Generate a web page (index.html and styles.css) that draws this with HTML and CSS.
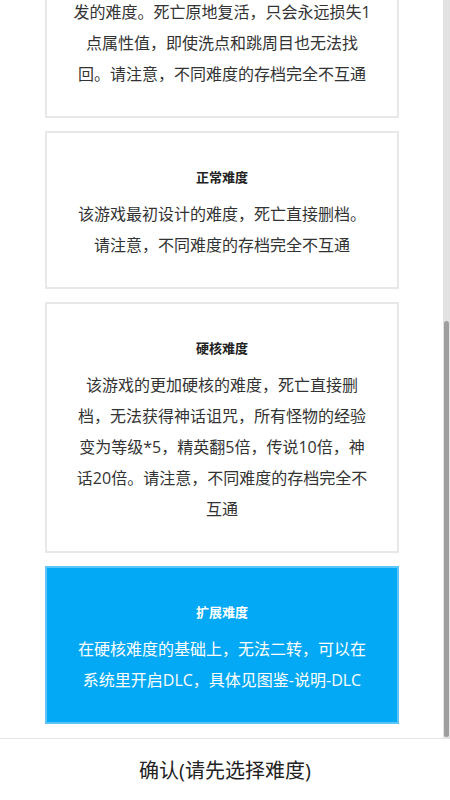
FILE: index.html
```html
<!DOCTYPE html>
<html lang="zh-CN">

<head>
    <meta charset="UTF-8">
    <meta name="viewport" content="width=device-width, initial-scale=1.0">
    <title>选择难度</title>
    <link rel="stylesheet" href="styles.css">
</head>

<body>
    <div class="dialog">
        <div class="list-wrap">
            <div class="list">
                <div class="card">
                    <div class="card-title">简单难度</div>
                    <div class="card-text">该游戏为了照顾休闲玩家和新手玩家而开发的难度。死亡原地复活，只会永远损失1点属性值，即使洗点和跳周目也无法找回。请注意，不同难度的存档完全不互通</div>
                </div>
                <div class="card">
                    <div class="card-title">正常难度</div>
                    <div class="card-text">该游戏最初设计的难度，死亡直接删档。请注意，不同难度的存档完全不互通</div>
                </div>
                <div class="card">
                    <div class="card-title">硬核难度</div>
                    <div class="card-text">该游戏的更加硬核的难度，死亡直接删档，无法获得神话诅咒，所有怪物的经验变为等级*5，精英翻5倍，传说10倍，神话20倍。请注意，不同难度的存档完全不互通</div>
                </div>
                <div class="card selected">
                    <div class="card-title">扩展难度</div>
                    <div class="card-text">在硬核难度的基础上，无法二转，可以在系统里开启DLC，具体见图鉴-说明-DLC</div>
                </div>
            </div>
            <div class="scroll-track">
                <div class="scroll-thumb"></div>
            </div>
        </div>
        <div class="confirm">确认(请先选择难度)</div>
    </div>
</body>

</html>
```

FILE: styles.css
```css
body {
    margin: 0;
    background-color: #ffffff;
    font-family: "Open Sans", "Noto Sans CJK SC", sans-serif;
    color: #333;
}

.dialog {
    display: flex;
    flex-direction: column;
    height: 800px;
    width: 450px;
}

.list-wrap {
    flex: 1;
    position: relative;
    overflow: hidden;
    border-bottom: 1px solid #e4e4e4;
}

.list {
    height: 100%;
    display: flex;
    flex-direction: column;
    justify-content: flex-end;
    gap: 13px;
    padding: 0 51px 14px 45px;
    box-sizing: border-box;
}

.card {
    flex-shrink: 0;
    border: 2px solid #e8e8e8;
    background-color: #ffffff;
    padding: 34px 25px 26px;
    text-align: center;
}

.card-title {
    font-size: 13px;
    font-weight: bold;
    line-height: 20px;
    color: #222;
    margin-bottom: 12px;
}

.card-text {
    font-size: 16px;
    line-height: 31px;
}

.card.selected {
    background-color: #03a9f4;
    border-color: #5cc4f6;
    color: #ffffff;
}

.card.selected .card-title {
    color: #ffffff;
}

.scroll-track {
    position: absolute;
    top: 0;
    right: 0;
    bottom: 0;
    width: 7px;
    background-color: #e2e2e2;
}

.scroll-thumb {
    position: absolute;
    left: 1px;
    right: 1px;
    top: 321px;
    bottom: 1px;
    border-radius: 3px;
    background-color: #9e9e9e;
}

.confirm {
    height: 61px;
    display: flex;
    align-items: center;
    justify-content: center;
    font-size: 20px;
    color: #222;
}
```
